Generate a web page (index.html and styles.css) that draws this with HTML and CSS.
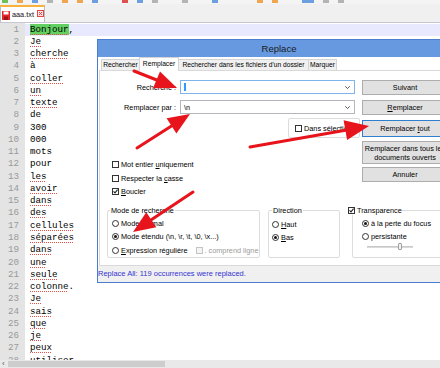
FILE: index.html
```html
<!DOCTYPE html>
<html lang="fr">
<head>
    <meta charset="UTF-8">
    <meta name="viewport" content="width=device-width, initial-scale=1.0">
    <title>aaa.txt - Replace</title>
    <link rel="stylesheet" href="styles.css">
</head>
<body>
    <div class="toolbar">
        <span class="tb g"></span><span class="tb o"></span><span class="tb b"></span><span class="tb k"></span>
        <span class="tb o"></span><span class="tb o"></span><span class="tb b"></span><span class="sep"></span>
        <span class="tb r"></span><span class="tb b"></span><span class="tb k"></span><span class="sep"></span>
        <span class="tb k"></span><span class="sep"></span><span class="tb b"></span><span class="sep"></span>
        <span class="sep"></span><span class="tb o"></span><span class="tb o"></span><span class="sep"></span>
        <span class="tb b wide"></span><span class="tb k"></span><span class="tb k"></span>
    </div>

    <div class="tabbar">
        <div class="filetab">
            <svg class="save-ico" width="8" height="9" viewBox="0 0 8 9">
                <rect x="0" y="0" width="8" height="9" fill="#e2252b"/>
                <rect x="1.5" y="0.5" width="5" height="3" fill="#fff"/>
                <rect x="2" y="5.5" width="4" height="3.5" fill="#a01418"/>
            </svg>
            <span class="tab-name">aaa.txt</span>
            <svg class="close-ico" width="7" height="7" viewBox="0 0 7 7">
                <rect x="0.5" y="0.5" width="6" height="6" fill="#fbe3e3" stroke="#e04848"/>
                <path d="M2 2 L5 5 M5 2 L2 5" stroke="#e04848" stroke-width="1"/>
            </svg>
        </div>
    </div>

    <div class="editor">
        <div class="gutter">
            <div>1</div><div>2</div><div>3</div><div>4</div><div>5</div><div>6</div><div>7</div>
            <div>8</div><div>9</div><div>10</div><div>11</div><div>12</div><div>13</div><div>14</div>
            <div>15</div><div>16</div><div>17</div><div>18</div><div>19</div><div>20</div><div>21</div>
            <div>22</div><div>23</div><div>24</div><div>25</div><div>26</div><div>27</div><div>28</div>
        </div>
        <div class="code">
            <div class="cur"><span class="hl sp">Bonjour</span>,</div>
            <div><span class="sp">Je</span></div>
            <div><span class="sp">cherche</span></div>
            <div>à</div>
            <div><span class="sp">coller</span></div>
            <div><span class="sp">un</span></div>
            <div><span class="sp">texte</span></div>
            <div>de</div>
            <div>300</div>
            <div>000</div>
            <div>mots</div>
            <div>pour</div>
            <div><span class="sp">les</span></div>
            <div><span class="sp">avoir</span></div>
            <div><span class="sp">dans</span></div>
            <div><span class="sp">des</span></div>
            <div><span class="sp">cellules</span></div>
            <div><span class="sp">séparées</span></div>
            <div><span class="sp">dans</span></div>
            <div><span class="sp">une</span></div>
            <div><span class="sp">seule</span></div>
            <div><span class="sp">colonne</span>.</div>
            <div><span class="sp">Je</span></div>
            <div><span class="sp">sais</span></div>
            <div><span class="sp">que</span></div>
            <div><span class="sp">je</span></div>
            <div><span class="sp">peux</span></div>
            <div><span class="sp">utiliser</span></div>
        </div>
    </div>

    <div class="hscroll">
        <span class="hs-arrow">&lsaquo;</span>
        <span class="hs-thumb"></span>
    </div>

    <!-- boite de dialogue Remplacer -->
    <div class="dialog">
        <div class="dlg-title">Replace</div>
        <div class="dlg-tabs">
            <span class="dtab t1">Rechercher</span>
            <span class="dtab t2 active">Remplacer</span>
            <span class="dtab t3">Rechercher dans les fichiers d'un dossier</span>
            <span class="dtab t4">Marquer</span>
        </div>

        <div class="dlg-panel">
            <div class="top">
                <div class="left">
                    <div class="field">
                        <label>Recherche :</label>
                        <div class="combo focus">
                            <span class="sel"></span>
                            <svg class="caret" width="5" height="3" viewBox="0 0 5 3"><path d="M0.3 0.3 L2.5 2.6 L4.7 0.3" fill="none" stroke="#444" stroke-width="0.9"/></svg>
                        </div>
                    </div>
                    <div class="field">
                        <label>Remplacer par :</label>
                        <div class="combo">
                            <span class="val">\n</span>
                            <svg class="caret" width="5" height="3" viewBox="0 0 5 3"><path d="M0.3 0.3 L2.5 2.6 L4.7 0.3" fill="none" stroke="#444" stroke-width="0.9"/></svg>
                        </div>
                    </div>
                    <div class="insel"><span class="cb"></span><span>Dans sélection</span></div>

                    <div class="opts">
                        <div class="opt"><span class="cb"></span><span>Mot entier <u>u</u>niquement</span></div>
                        <div class="opt"><span class="cb"></span><span>Respecter la <u>c</u>asse</span></div>
                        <div class="opt"><span class="cb on"><svg width="5" height="5" viewBox="0 0 5 5"><path d="M0.5 2.4 L2 3.9 L4.6 0.7" fill="none" stroke="#222" stroke-width="1.1"/></svg></span><span><u>B</u>oucler</span></div>
                    </div>
                </div>

                <div class="buttons">
                    <div class="btn b1">Suivant</div>
                    <div class="btn b2"><span><u>R</u>emplacer</span></div>
                    <div class="btn b3 default"><span>Remplacer <u>t</u>out</span></div>
                    <div class="btn b4"><span>Remplacer dans tous les<br>documents ouverts</span></div>
                    <div class="btn b5">Annuler</div>
                </div>
            </div>

            <div class="groups">
                <fieldset class="grp mode">
                    <legend>Mode de recherche</legend>
                    <div class="rows">
                        <div class="opt"><span class="rb"></span><span>Mode <u>n</u>ormal</span></div>
                        <div class="opt"><span class="rb on"></span><span>Mode étendu (\n, \r, \t, \0, \x...)</span></div>
                        <div class="opt"><span class="rb"></span><span><u>E</u>xpression régulière</span><span class="cb off"></span><span class="dim">. comprend ligne</span></div>
                    </div>
                </fieldset>
                <fieldset class="grp dir">
                    <legend>Direction</legend>
                    <div class="rows">
                        <div class="opt"><span class="rb"></span><span><u>H</u>aut</span></div>
                        <div class="opt"><span class="rb on"></span><span><u>B</u>as</span></div>
                    </div>
                </fieldset>
                <fieldset class="grp transp">
                    <legend><span class="cb on"><svg width="5" height="5" viewBox="0 0 5 5"><path d="M0.5 2.4 L2 3.9 L4.6 0.7" fill="none" stroke="#222" stroke-width="1.1"/></svg></span><span>Transparence</span></legend>
                    <div class="rows">
                        <div class="opt"><span class="rb on"></span><span>à la perte du focus</span></div>
                        <div class="opt"><span class="rb"></span><span>persistante</span></div>
                        <div class="slider"><span class="track"></span><span class="thumb"></span><span class="track short"></span></div>
                    </div>
                </fieldset>
            </div>
        </div>

        <div class="dlg-status">Replace All: 119 occurrences were replaced.</div>
    </div>

    <!-- fleches rouges ajoutees sur la capture -->
    <svg class="marks" width="440" height="368" viewBox="0 0 440 368">
        <g fill="#e8141b" stroke="#e8141b" stroke-width="3" stroke-linecap="round">
            <line x1="134" y1="71" x2="158" y2="80.5"/>
            <polygon stroke="none" points="177,88 153,88.3 160,71.5"/>

            <line x1="137" y1="148" x2="171.5" y2="125.9"/>
            <polygon stroke="none" points="190,114 176.4,133.5 166.6,118.3"/>

            <line x1="250" y1="147" x2="345.4" y2="130.2"/>
            <polygon stroke="none" points="369,126 347.1,140 343.6,120.3"/>

            <line x1="193" y1="192" x2="151.3" y2="219.8"/>
            <polygon stroke="none" points="133,232 146.3,212.3 156.3,227.3"/>
        </g>
    </svg>
</body>
</html>
```

FILE: styles.css
```css
* {
    box-sizing: border-box;
}
body {
    margin: 0;
    width: 440px;
    height: 368px;
    overflow: hidden;
    position: relative;
    background-color: #fff;
    font-family: "Liberation Sans", Arial, sans-serif;
}

/* barre d'outils (seulement le bas des icones est visible) */
.toolbar {
    height: 4px;
    background-color: #f4f4f4;
    display: flex;
    align-items: flex-start;
    gap: 9px;
    padding-left: 2px;
}
.tb {
    width: 6px;
    height: 3px;
}
.tb.wide {
    width: 12px;
}
.sep {
    width: 6px;
}
.g { background-color: #6fbf5a; }
.o { background-color: #f0a650; }
.b { background-color: #6d9ee0; }
.k { background-color: #b4b4b4; }
.r { background-color: #e05050; }

.tabbar {
    height: 19px;
    background-color: #f0f0f0;
    border-bottom: 1px solid #c6c6d4;
    padding-top: 1px;
}
.filetab {
    width: 45px;
    height: 17px;
    background-color: #fff;
    border: 1px solid #bdbdbd;
    border-top: 2px solid #f8b23c;
    border-bottom: none;
    display: flex;
    align-items: center;
    padding-left: 1px;
    font-size: 7.3px;
    color: #111;
}
.save-ico {
    margin-top: 2px;
}
.tab-name {
    margin-left: 2px;
}
.close-ico {
    margin-left: 3px;
    margin-top: -3px;
}

.editor {
    display: flex;
    height: 337px;
    overflow: hidden;
    font-family: "Liberation Mono", "Courier New", monospace;
    font-size: 9.2px;
}
.gutter {
    width: 25px;
    flex: none;
    background-color: #e4e4e4;
    color: #9a9a9a;
    text-align: right;
    padding: 0.5px 6px 0 0;
}
.gutter div,
.code div {
    height: 12.27px;
    line-height: 12.27px;
    white-space: nowrap;
}
.code {
    flex: 1;
    padding-top: 0.5px;
    color: #000;
}
.code div {
    padding-left: 5px;
}
.code .cur {
    background-color: #e8e8ff;
}
.hl {
    background-color: #62d162;
}
.sp {
    text-decoration: underline dotted #e6504c;
    text-decoration-thickness: 1px;
    text-underline-offset: 1.5px;
}

.hscroll {
    height: 8px;
    background-color: #e9e9e9;
    display: flex;
    align-items: center;
}
.hs-arrow {
    width: 8px;
    font-size: 8px;
    line-height: 8px;
    color: #555;
    padding-left: 2px;
}
.hs-thumb {
    width: 157px;
    height: 6px;
    background-color: #cdcdcd;
}

/* dialogue */
.dialog {
    position: absolute;
    left: 97px;
    top: 39px;
    width: 364px;
    height: 244px;
    border: 1px solid #4a7dcd;
    background-color: #fff;
    font-size: 7.3px;
    color: #000;
}
.dlg-title {
    height: 17px;
    line-height: 17px;
    background-color: #6799e0;
    text-align: center;
    font-size: 9.5px;
    color: #1b1b1b;
}
.dlg-tabs {
    height: 13px;
    display: flex;
    align-items: flex-end;
    padding-left: 3px;
}
.dtab {
    height: 11px;
    line-height: 10px;
    border: 1px solid #d4d4d4;
    border-bottom: none;
    border-left: none;
    background-color: #f0f0f0;
    text-align: center;
    font-size: 6.7px;
    white-space: nowrap;
    overflow: hidden;
}
.dtab.t1 {
    width: 39px;
    border-left: 1px solid #d4d4d4;
}
.dtab.t2 { width: 40px; }
.dtab.t3 { width: 130px; }
.dtab.t4 { width: 28px; }
.dtab.active {
    height: 14px;
    line-height: 12px;
    background-color: #fff;
    border-left: 1px solid #d4d4d4;
    margin-left: -1px;
    margin-bottom: -1px;
    position: relative;
}

.dlg-panel {
    height: 196px;
    background-color: #fff;
    border: 1px solid #d9d9d9;
    margin: 0 1px;
}
.top {
    display: flex;
    padding-top: 9px;
}
.left {
    width: 258px;
    flex: none;
}
.field {
    display: flex;
    align-items: center;
    height: 14px;
}
.field + .field {
    margin-top: 6px;
}
.field label {
    width: 76px;
    margin-right: 4px;
    text-align: right;
    white-space: nowrap;
}
.combo {
    width: 175px;
    height: 14px;
    border: 1px solid #b4b6bb;
    display: flex;
    align-items: center;
    justify-content: space-between;
    padding: 0 4px 0 3px;
}
.combo.focus {
    border-color: #7eb4ea;
}
.sel {
    width: 2px;
    height: 8px;
    background-color: #3399ff;
}
.val {
    font-size: 7.3px;
}

.insel {
    margin: 4px 0 0 188px;
    width: 72px;
    height: 20px;
    border: 1px solid #dcdcdc;
    border-radius: 2px;
    display: flex;
    align-items: center;
    gap: 2px;
    padding-left: 6px;
    white-space: nowrap;
}
.opts {
    margin-top: 20px;
}
.opt {
    height: 13.5px;
    display: flex;
    align-items: center;
    gap: 2px;
    padding-left: 12px;
    white-space: nowrap;
}

.cb {
    width: 7px;
    height: 7px;
    flex: none;
    border: 1px solid #333;
    background-color: #fff;
    display: inline-flex;
    align-items: center;
    justify-content: center;
}
.cb.off {
    border-color: #c4c4c4;
    background-color: #f4f4f4;
    margin-left: 6px;
}
.rb {
    width: 7px;
    height: 7px;
    flex: none;
    border: 1px solid #333;
    border-radius: 50%;
    display: inline-flex;
    align-items: center;
    justify-content: center;
}
.rb.on::after {
    content: "";
    width: 3px;
    height: 3px;
    border-radius: 50%;
    background-color: #111;
}
.dim {
    color: #9a9a9a;
}

.buttons {
    width: 86px;
    flex: none;
    margin-left: 4px;
    display: flex;
    flex-direction: column;
}
.btn {
    height: 15px;
    border: 1px solid #adadad;
    background-color: #e1e1e1;
    display: flex;
    align-items: center;
    justify-content: center;
    text-align: center;
    line-height: 9px;
    white-space: nowrap;
    overflow: hidden;
}
.btn.b2 { margin-top: 5px; }
.btn.b3 {
    margin-top: 5px;
    height: 17px;
}
.btn.b4 {
    margin-top: 4px;
    height: 23px;
}
.btn.b5 { margin-top: 3px; }
.btn.default {
    border-color: #2f7fd0;
}

.groups {
    display: flex;
    margin-top: 7px;
    padding-left: 7px;
}
.grp {
    margin: 0;
    min-width: 0;
    height: 52.5px;
    border: 1px solid #dcdcdc;
    border-radius: 2px;
    padding: 0 0 0 4px;
    flex: none;
}
.grp legend {
    padding: 0 1px;
    height: 9px;
    line-height: 9px;
    white-space: nowrap;
}
.grp .opt {
    padding-left: 0;
}
.mode {
    width: 153px;
    margin-right: 8px;
}
.mode legend {
    margin-left: -2px;
}
.mode .rows {
    margin-top: 1.75px;
}
.dir {
    width: 72px;
    margin-right: 12px;
    padding-left: 3px;
}
.dir .rows {
    margin-top: 2.75px;
}
.transp {
    width: 100px;
    padding-left: 9px;
}
.transp legend {
    margin-left: -14px;
    display: flex;
    align-items: center;
    gap: 2px;
    padding: 0;
}
.transp .rows {
    margin-top: 1.75px;
}
.slider {
    height: 7px;
    width: 46px;
    margin-left: 5px;
    display: flex;
    align-items: center;
}
.track {
    width: 31px;
    height: 2px;
    background-color: #dadada;
    border-top: 1px solid #c8c8c8;
}
.track.short {
    width: 11px;
}
.thumb {
    width: 4px;
    height: 7px;
    border: 1px solid #a0a0a0;
    background-color: #f2f2f2;
    border-radius: 1px;
}

.dlg-status {
    height: 16px;
    line-height: 16px;
    background-color: #f0f0f0;
    color: #3434d4;
    font-size: 7.5px;
    white-space: nowrap;
}

/* calque des fleches */
.marks {
    position: absolute;
    left: 0;
    top: 0;
    pointer-events: none;
}
```
